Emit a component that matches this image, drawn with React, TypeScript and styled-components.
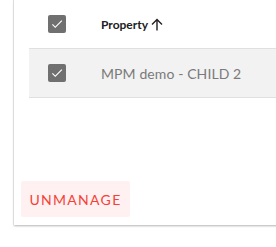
import React from 'react'
import styled, { createGlobalStyle } from 'styled-components'

const GlobalStyle = createGlobalStyle`
    html, body {
        margin: 0;
        padding: 0;
        background: #ffffff;
        overflow: hidden;
        font-family: Lato, "Liberation Sans", sans-serif;
    }
`

const Page = styled.div`
    width: 276px;
    height: 247px;
    padding-left: 13px;
    box-sizing: border-box;
    overflow: hidden;
    display: flex;
    align-items: flex-start;
`

// card runs off the right side of the viewport, so only left/bottom edges show
const Card = styled.div`
    flex: none;
    width: 360px;
    background: #ffffff;
    border-left: 1px solid #dcdcdc;
    box-shadow: 0 2px 2px -1px rgba(0, 0, 0, 0.3);
    display: flex;
    flex-direction: column;
    padding: 0 0 8px 7px;
    box-sizing: border-box;
`

const Table = styled.div`
    margin-left: 8px;
    display: flex;
    flex-direction: column;
`

const Row = styled.div<{ $header?: boolean }>`
    display: flex;
    align-items: center;
    height: 49px;
    box-sizing: border-box;
    border-bottom: 1px solid #e0e0e0;
    background: ${({ $header }) => ($header ? '#ffffff' : '#f2f2f2')};
`

const CheckCell = styled.div`
    width: 72px;
    padding-left: 19px;
    box-sizing: border-box;
    display: flex;
    align-items: center;
`

const Box = styled.span`
    width: 18px;
    height: 18px;
    border-radius: 2px;
    background: #707070;
    display: flex;
    align-items: center;
    justify-content: center;
`

const HeaderLabel = styled.div`
    display: flex;
    align-items: center;
    gap: 3px;
    font-size: 12px;
    font-weight: 700;
    color: #212121;
`

const CellText = styled.div`
    font-size: 14px;
    color: #7a7a7a;
    letter-spacing: 0.1px;
`

const Spacer = styled.div`
    height: 83px;
`

const DangerButton = styled.button`
    align-self: flex-start;
    width: 109px;
    height: 36px;
    border: none;
    border-radius: 2px;
    background: #fff1f1;
    color: #f44336;
    font-family: Lato, "Liberation Sans", sans-serif;
    font-size: 14px;
    letter-spacing: 1.3px;
    text-transform: uppercase;
    padding: 0;
`

const Check = () => (
    <Box>
        <svg width="14" height="14" viewBox="0 0 24 24">
            <path d="M9 16.2L4.8 12l-1.4 1.4L9 19 21 7l-1.4-1.4L9 16.2z" fill="#ffffff" />
        </svg>
    </Box>
)

const App: React.FC = () => (
    <>
        <GlobalStyle />
        <Page>
            <Card>
                <Table>
                    <Row $header>
                        <CheckCell>
                            <Check />
                        </CheckCell>
                        <HeaderLabel>
                            Property
                            <svg width="12" height="13" viewBox="0 0 12 13">
                                <path
                                    d="M6 12.5V1.5M1 6.5L6 1.5L11 6.5"
                                    fill="none"
                                    stroke="#212121"
                                    strokeWidth="1.4"
                                />
                            </svg>
                        </HeaderLabel>
                    </Row>
                    <Row>
                        <CheckCell>
                            <Check />
                        </CheckCell>
                        <CellText>MPM demo - CHILD 2</CellText>
                    </Row>
                </Table>
                <Spacer />
                <DangerButton>Unmanage</DangerButton>
            </Card>
        </Page>
    </>
)

export default App
